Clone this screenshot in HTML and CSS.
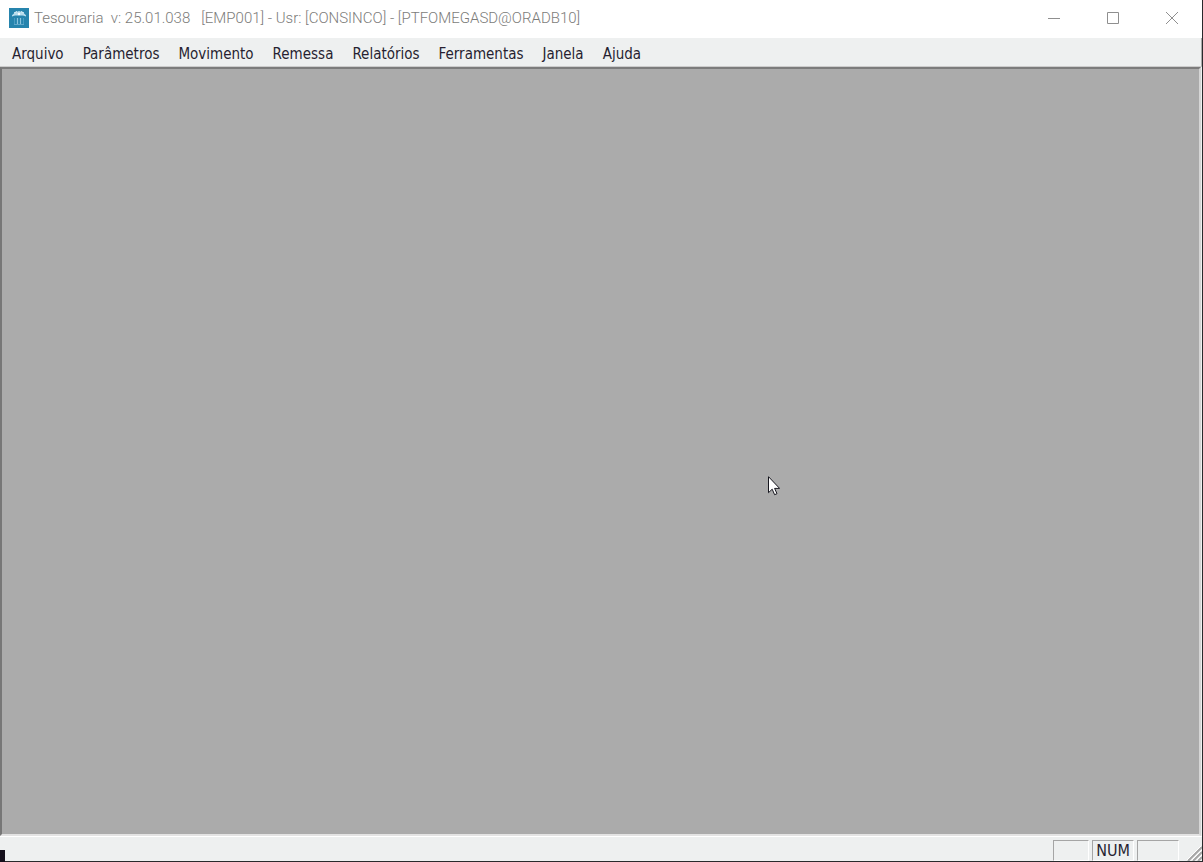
FILE: index.html
```html
<!DOCTYPE html>
<html lang="pt-BR">
<head>
<meta charset="utf-8">
<title>Tesouraria</title>
<link rel="stylesheet" href="styles.css">
</head>
<body>
<div class="window">
  <header class="titlebar">
    <svg class="app-icon" viewBox="0 0 20 20" aria-hidden="true">
      <rect width="20" height="20" fill="#2684ad"/>
      <path d="M3 8.500V7.200L6 4.500 10 3l4 1.500 3 2.700v1.300l-3-1H6z" fill="#b5dced"/>
      <path d="M5 5l3-1.500M12 3.500L15 5" stroke="#e8f6fb" stroke-width="1"/>
      <circle cx="10" cy="6" r="1.200" fill="#fff"/>
      <path d="M5.500 10v6M14.500 10v6" stroke="#4a9cc2"/>
      <path d="M8.500 10v6M11.500 10v6" stroke="#8cc4dd" stroke-width="1.200"/>
      <path d="M5 16.500h10" stroke="#62a9cb"/>
    </svg>
    <h1 class="title">Tesouraria&nbsp; v: 25.01.038&nbsp;&nbsp; [EMP001] - Usr: [CONSINCO] - [PTFOMEGASD@ORADB10]</h1>
    <div class="controls">
      <button class="control" type="button" aria-label="Minimizar"><svg class="control-icon" viewBox="0 0 12 12"><path d="M0 6.500h12"/></svg></button>
      <button class="control" type="button" aria-label="Maximizar"><svg class="control-icon" viewBox="0 0 12 12"><path d="M.5.500h11v11H.5z"/></svg></button>
      <button class="control" type="button" aria-label="Fechar"><svg class="control-icon" viewBox="0 0 12 12"><path d="M0 0l12 12M12 0L0 12"/></svg></button>
    </div>
  </header>
  <nav class="menubar">
    <button class="menu" type="button">Arquivo</button>
    <button class="menu" type="button">Parâmetros</button>
    <button class="menu" type="button">Movimento</button>
    <button class="menu" type="button">Remessa</button>
    <button class="menu" type="button">Relatórios</button>
    <button class="menu" type="button">Ferramentas</button>
    <button class="menu" type="button">Janela</button>
    <button class="menu" type="button">Ajuda</button>
  </nav>
  <main class="workspace"></main>
  <footer class="statusbar">
    <span class="cell cell-first"></span>
    <span class="cell cell-num">NUM</span>
    <span class="cell cell-last"></span>
    <svg class="grip" viewBox="0 0 15 15" aria-hidden="true">
      <path d="M1 15L15 1M6 15l9-9M11 15l4-4" stroke="#a6a6a6" stroke-width="2"/>
      <path d="M0 14L14 0M5 14l10-10M10 14l5-5" stroke="#fff"/>
    </svg>
  </footer>
  <span class="corner"></span>
  <svg class="cursor" viewBox="0 0 12 20" aria-hidden="true"><path d="M.5.700v16l3.700-3.500 2.400 5.500 2.400-1-2.400-5.300h5z" fill="#fff" stroke="#16161e"/></svg>
</div>
</body>
</html>
```
FILE: styles.css
```css
* {
  box-sizing: border-box;
}

body {
  margin: 0;
  font-family: "DejaVu Sans Condensed", "DejaVu Sans", sans-serif;
  background: #fff;
}

button {
  padding: 0;
  border: 0;
  background: none;
  font: inherit;
  color: inherit;
}

.window {
  position: relative;
  display: flex;
  flex-direction: column;
  height: 100vh;
  border-right: 1px solid #29292c;
  border-bottom: 1px solid #29292c;
  background: #eef0f0;
}

.titlebar {
  display: flex;
  align-items: center;
  height: 38px;
  padding: 0 1px 3px 9px;
  background: #fff;
}

.app-icon {
  width: 20px;
  height: 20px;
}

.title {
  flex: 1;
  margin: 0 0 0 5px;
  font: 300 15px/20px Roboto, "Open Sans", sans-serif;
  color: #7c7c7a;
  white-space: nowrap;
}

.controls {
  display: flex;
}

.control {
  display: grid;
  place-items: center;
  width: 59px;
  height: 34px;
}

.control-icon {
  width: 12px;
  height: 12px;
  fill: none;
  stroke: #8f8f8f;
}

.menubar {
  display: flex;
  gap: 1px;
  height: 29px;
  padding-left: 3px;
  border-right: 1px solid #aaa;
  border-bottom: 1px solid #ccc;
}

.menu {
  padding: 4px 9px 0;
  font-size: 15px;
  line-height: 24px;
  color: #271f31;
}

.workspace {
  flex: 1;
  margin-right: 1px;
  border: 2px solid #777;
  border-top-color: #7c7c7c;
  border-right-color: #d5d5d5;
  border-bottom-color: #e3e3e3;
  background: #ababab;
}

.statusbar {
  display: flex;
  justify-content: flex-end;
  align-items: flex-end;
  gap: 3px;
  height: 25px;
  border-top: 1px solid #fff;
}

.cell {
  height: 21px;
  border: 1px solid #a5a5a5;
  border-right-color: #fff;
  border-bottom-color: #fff;
  font-size: 16px;
  line-height: 20px;
  color: #271f31;
  text-align: center;
}

.cell-first {
  width: 36px;
}

.cell-num {
  width: 42px;
}

.cell-last {
  width: 42px;
}

.grip {
  width: 15px;
  height: 15px;
  margin-left: 5px;
}

.corner {
  position: absolute;
  left: 0;
  bottom: -1px;
  width: 5px;
  height: 12px;
  background: #15101c;
}

.cursor {
  position: absolute;
  left: 768px;
  top: 476px;
  width: 12px;
  height: 20px;
}
```
